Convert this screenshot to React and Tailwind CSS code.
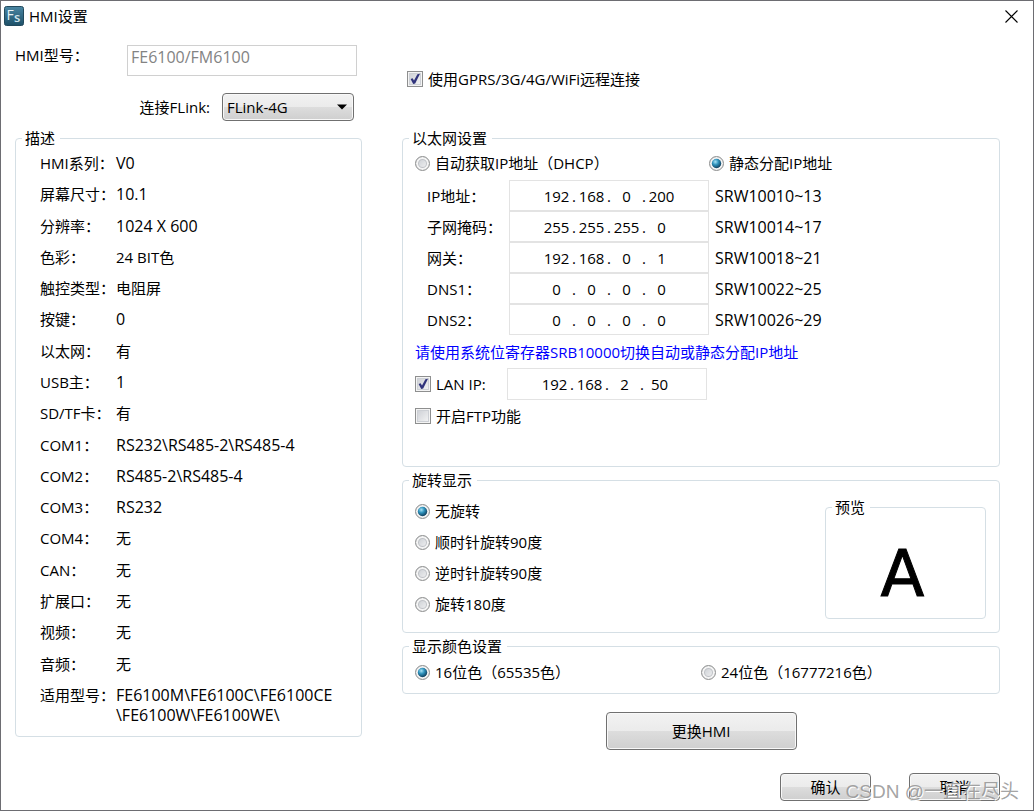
import React, { useId, useState } from "react";

const specs = [
  { name: "HMI系列：", value: "V0" },
  { name: "屏幕尺寸：", value: "10.1" },
  { name: "分辨率：", value: "1024 X 600" },
  { name: "色彩：", value: "24 BIT色", cjk: true },
  { name: "触控类型：", value: "电阻屏", cjk: true },
  { name: "按键：", value: "0" },
  { name: "以太网：", value: "有", cjk: true },
  { name: "USB主：", value: "1" },
  { name: "SD/TF卡：", value: "有", cjk: true },
  { name: "COM1：", value: "RS232\\RS485-2\\RS485-4" },
  { name: "COM2：", value: "RS485-2\\RS485-4" },
  { name: "COM3：", value: "RS232" },
  { name: "COM4：", value: "无", cjk: true },
  { name: "CAN：", value: "无", cjk: true },
  { name: "扩展口：", value: "无", cjk: true },
  { name: "视频：", value: "无", cjk: true },
  { name: "音频：", value: "无", cjk: true },
  { name: "适用型号：", value: "FE6100M\\FE6100C\\FE6100CE\n\\FE6100W\\FE6100WE\\" },
];

const addresses = [
  { name: "IP地址：", parts: ["192", "168", "0", "200"], register: "SRW10010~13" },
  { name: "子网掩码：", parts: ["255", "255", "255", "0"], register: "SRW10014~17" },
  { name: "网关：", parts: ["192", "168", "0", "1"], register: "SRW10018~21" },
  { name: "DNS1：", parts: ["0", "0", "0", "0"], register: "SRW10022~25" },
  { name: "DNS2：", parts: ["0", "0", "0", "0"], register: "SRW10026~29" },
];

const rotations = ["无旋转", "顺时针旋转90度", "逆时针旋转90度", "旋转180度"];

const Group = ({ title, className = "", children }) => (
  <fieldset className={`min-w-0 rounded-[4px] border border-[#d5dfe5] ${className}`}>
    <legend className="ml-1.5 pl-[3px] pr-[5px]">{title}</legend>
    {children}
  </fieldset>
);

const Check = ({ label, defaultChecked }) => (
  <label className="flex items-center gap-[5px]">
    <span className="relative flex shrink-0">
      <input
        type="checkbox"
        defaultChecked={defaultChecked}
        className="peer size-4 appearance-none border border-[#8e8f8f] bg-linear-to-br from-[#c9ccd2] to-[#f8f8f8] shadow-[inset_0_0_0_1px_#f4f4f4,inset_0_0_0_2px_#cdd0d5]"
      />
      <svg
        viewBox="0 0 16 16"
        className="pointer-events-none absolute inset-0 hidden size-4 peer-checked:block"
      >
        <path d="M3.6 8 5.6 7.2 7 9.6 10.4 3.2 13 2.8 8.2 12.6 6.2 13Z" fill="#31347c" />
      </svg>
    </span>
    {label}
  </label>
);

const Radio = ({ name, label, checked, onChange }) => {
  const dotId = useId();

  return (
    <label className="flex items-center gap-[5px]">
      <span className="relative flex shrink-0">
        <input
          type="radio"
          name={name}
          checked={checked}
          onChange={onChange}
          className="peer size-[15px] appearance-none rounded-full border border-[#8e8f8f] bg-linear-to-br from-[#c4c8ce] to-[#f8f8f8] shadow-[inset_0_0_0_2px_#f4f4f4,inset_0_0_0_3px_#bfc2c7]"
        />
        <svg
          viewBox="0 0 15 15"
          className="pointer-events-none absolute inset-0 hidden size-[15px] peer-checked:block"
        >
          <defs>
            <radialGradient id={dotId} cx="0.38" cy="0.32" r="0.7">
              <stop offset="0" stopColor="#a9e2f5" />
              <stop offset="0.45" stopColor="#2f93bd" />
              <stop offset="1" stopColor="#0f3d5c" />
            </radialGradient>
          </defs>
          <circle cx="7.5" cy="7.5" r="4.7" fill={`url(#${dotId})`} />
        </svg>
      </span>
      {label}
    </label>
  );
};

const IpInput = ({ label, parts, className = "" }) => (
  <div
    role="group"
    aria-label={label}
    className={`flex w-[200px] items-center justify-center border border-[#e3e3e3] bg-white ${className}`}
  >
    {parts.map((part, index) => (
      <React.Fragment key={index}>
        {index > 0 && <span className="w-[7px] text-center">.</span>}
        <input
          type="text"
          defaultValue={part}
          maxLength={3}
          aria-label={`${label} ${index + 1}`}
          className="w-7 text-center focus:outline-none"
        />
      </React.Fragment>
    ))}
  </div>
);

const Button = ({ className = "", children }) => (
  <button
    type="button"
    className={`rounded-[4px] border border-[#707070] bg-[linear-gradient(#f2f2f2,#ebebeb_50%,#dddddd_50%,#cfcfcf)] shadow-[inset_0_0_0_1px_#f8f8f8] ${className}`}
  >
    {children}
  </button>
);

const App = () => {
  const [ipMode, setIpMode] = useState("static");
  const [rotation, setRotation] = useState(0);
  const [color, setColor] = useState("16");

  return (
    <div
      lang="zh-CN"
      className="relative min-h-screen border border-[#6d6d72] bg-white font-['Open_Sans','Noto_Sans_CJK_SC',sans-serif] text-[15px] leading-5 text-black"
    >
      {/* Title bar */}
      <header className="flex h-[30px] items-center pl-[3px] pr-[15px]">
        <svg viewBox="0 0 20 20" className="size-5">
          <defs>
            <linearGradient id="logo" x1="0" y1="0" x2="0" y2="1">
              <stop offset="0" stopColor="#4a86a3" />
              <stop offset="1" stopColor="#1d5068" />
            </linearGradient>
          </defs>
          <rect x="0.5" y="0.5" width="19" height="19" rx="2" fill="url(#logo)" stroke="#22495c" />
          <text x="2.5" y="14" fontSize="14" fill="#e8f2f6" fontFamily="Open Sans">F</text>
          <text x="10" y="16" fontSize="13" fontWeight="600" fill="#cfe3ec" fontFamily="Open Sans">s</text>
        </svg>
        <h1 className="ml-[5px] flex-1">HMI设置</h1>
        <button type="button" aria-label="关闭" className="flex">
          <svg viewBox="0 0 13 13" className="size-[13px]" stroke="#000" strokeWidth="1.1">
            <path d="M0.5 0.5 12.5 12.5M12.5 0.5 0.5 12.5" />
          </svg>
        </button>
      </header>

      <main className="grid grid-cols-[minmax(0,347px)_minmax(0,1fr)] gap-x-10 pl-3.5 pr-[33px]">
        {/* Left column */}
        <div>
          <div className="mt-3.5 flex">
            <label htmlFor="model" className="w-28">HMI型号：</label>
            <input
              id="model"
              type="text"
              disabled
              defaultValue="FE6100/FM6100"
              className="mr-[5px] h-[31px] min-w-0 flex-1 border border-[#d0d0d0] pb-2 pl-[3px] text-base leading-5 text-[#838383]"
            />
          </div>
          <div className="mr-2 mt-[17px] flex items-center justify-end gap-3">
            <label htmlFor="flink">连接FLink:</label>
            <div className="relative">
              <select
                id="flink"
                defaultValue="FLink-4G"
                className="block h-7 w-[132px] appearance-none rounded-[4px] border border-[#707070] bg-[linear-gradient(#f2f2f2,#ebebeb_50%,#dddddd_50%,#cfcfcf)] pl-1 shadow-[inset_0_0_0_1px_#f8f8f8]"
              >
                <option>FLink-4G</option>
              </select>
              <svg viewBox="0 0 10 6" className="pointer-events-none absolute right-[7px] top-[11px] h-1.5 w-2.5">
                <path d="M0 0.5H10L5 5.5Z" fill="#000" />
              </svg>
            </div>
          </div>

          <Group title="描述" className="mt-[7px]">
            <dl className="flex min-h-[588px] flex-col justify-between pb-[11px] pl-6 pt-[5px]">
              {specs.map((spec) => (
                <div key={spec.name} className="flex">
                  <dt className="w-19 shrink-0 whitespace-nowrap">{spec.name}</dt>
                  <dd className={`whitespace-pre ${spec.cjk ? "" : "text-base leading-5"}`}>{spec.value}</dd>
                </div>
              ))}
            </dl>
          </Group>
        </div>

        {/* Right column */}
        <div className="flex flex-col">
          <div className="mb-[39px] mt-[38px] flex pl-[5px]">
            <Check label="使用GPRS/3G/4G/WiFi远程连接" defaultChecked />
          </div>

          <Group title="以太网设置">
            <div className="pb-10 pl-3 pt-[5px]">
              <div className="mb-[7px] flex">
                <div className="w-[294px]">
                  <Radio
                    name="ip-mode"
                    label="自动获取IP地址（DHCP）"
                    checked={ipMode === "dhcp"}
                    onChange={() => setIpMode("dhcp")}
                  />
                </div>
                <Radio
                  name="ip-mode"
                  label="静态分配IP地址"
                  checked={ipMode === "static"}
                  onChange={() => setIpMode("static")}
                />
              </div>
              {addresses.map((item) => (
                <div key={item.name} className="flex items-center pl-3">
                  <span className="w-[82px]">{item.name}</span>
                  <IpInput label={item.name} parts={item.parts} className="h-[31px]" />
                  <span className="pl-1.5 text-base leading-5">{item.register}</span>
                </div>
              ))}
              <p className="mt-[7px] text-[#0000ff]">
                请使用系统位寄存器SRB10000切换自动或静态分配IP地址
              </p>
              <div className="my-1.5 flex items-center">
                <div className="w-23">
                  <Check label="LAN IP:" defaultChecked />
                </div>
                <IpInput label="LAN IP" parts={["192", "168", "2", "50"]} className="h-8" />
              </div>
              <Check label="开启FTP功能" />
            </div>
          </Group>

          <Group title="旋转显示" className="mt-[3px]">
            <div className="flex justify-between pb-[13px] pl-3 pr-[13px]">
              <div className="flex flex-col gap-[11px] pt-[11px]">
                {rotations.map((label, index) => (
                  <Radio
                    key={label}
                    name="rotation"
                    label={label}
                    checked={rotation === index}
                    onChange={() => setRotation(index)}
                  />
                ))}
              </div>
              <Group title="预览" className="mt-[7px] w-[161px]">
                <div
                  className="pr-1.5 pt-3.5 text-center font-['DejaVu_Sans'] text-[64px] leading-[87px] [-webkit-text-stroke:1px_#000]"
                  style={{ transform: `rotate(${[0, 90, -90, 180][rotation]}deg)` }}
                >
                  A
                </div>
              </Group>
            </div>
          </Group>

          <Group title="显示颜色设置" className="mt-[3px]">
            <div className="flex pb-[11px] pl-3 pt-1.5">
              <div className="w-[286px]">
                <Radio
                  name="color"
                  label="16位色（65535色）"
                  checked={color === "16"}
                  onChange={() => setColor("16")}
                />
              </div>
              <Radio
                name="color"
                label="24位色（16777216色）"
                checked={color === "24"}
                onChange={() => setColor("24")}
              />
            </div>
          </Group>

          <Button className="mt-[18px] h-[38px] w-[191px] self-center">更换HMI</Button>
          <div className="mt-[23px] flex justify-end gap-[38px]">
            <Button className="h-7 w-[91px]">确认</Button>
            <Button className="h-7 w-[91px]">取消</Button>
          </div>
        </div>
      </main>

      {/* Watermark */}
      <div className="pointer-events-none absolute bottom-1.5 right-3.5 font-['Liberation_Sans','Noto_Sans_CJK_SC',sans-serif] text-[19px] leading-6 text-[#8c8c8c]/80 [text-shadow:1px_1px_0_#ffffff]">
        CSDN @一直在尽头
      </div>
    </div>
  );
};

export default App;
